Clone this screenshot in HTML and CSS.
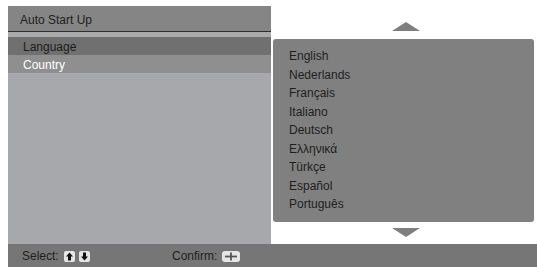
FILE: index.html
```html
<!DOCTYPE html>
<html>
<head>
<meta charset="utf-8">
<link rel="stylesheet" href="styles.css">
</head>
<body>
<div class="screen">
  <div class="main">
    <div class="left">
      <div class="header">Auto Start Up</div>
      <div class="strip"></div>
      <div class="item selected">Language</div>
      <div class="item active">Country</div>
      <div class="fill"></div>
    </div>
    <div class="right">
      <div class="arrow up">
        <svg width="28" height="9" viewBox="0 0 28 9"><polygon points="14,0 28,9 0,9" fill="#7e7e7e"/></svg>
      </div>
      <div class="list">
        <div class="lang">English</div>
        <div class="lang">Nederlands</div>
        <div class="lang">Français</div>
        <div class="lang">Italiano</div>
        <div class="lang">Deutsch</div>
        <div class="lang">Ελληνικά</div>
        <div class="lang">Türkçe</div>
        <div class="lang">Español</div>
        <div class="lang">Português</div>
      </div>
      <div class="arrow down">
        <svg width="28" height="9" viewBox="0 0 28 9"><polygon points="0,0 28,0 14,9" fill="#7e7e7e"/></svg>
      </div>
    </div>
  </div>
  <div class="footer">
    <div class="hint select">
      <span>Select:</span>
      <svg class="key" width="11" height="11" viewBox="0 0 11 11"><rect x="0" y="0" width="11" height="11" rx="2" fill="#e6e6e6"/><polygon points="5.5,1.5 9,5.5 7,5.5 7,9.5 4,9.5 4,5.5 2,5.5" fill="#111"/></svg>
      <svg class="key" width="11" height="11" viewBox="0 0 11 11"><rect x="0" y="0" width="11" height="11" rx="2" fill="#e6e6e6"/><polygon points="5.5,9.5 9,5.5 7,5.5 7,1.5 4,1.5 4,5.5 2,5.5" fill="#111"/></svg>
    </div>
    <div class="hint confirm">
      <span>Confirm:</span>
      <svg class="key" width="18" height="11" viewBox="0 0 18 11"><rect x="0" y="0" width="18" height="11" rx="3" fill="#e6e6e6"/><rect x="3" y="4.6" width="12" height="1.8" fill="#555"/><rect x="8.1" y="1.5" width="1.8" height="8" fill="#555"/></svg>
    </div>
  </div>
</div>
</body>
</html>
```
FILE: styles.css
```css
html, body {
  margin: 0;
  padding: 0;
  background: #ffffff;
}
body {
  width: 537px;
  height: 267px;
  overflow: hidden;
  font-family: "Liberation Sans", Arial, sans-serif;
  font-size: 12px;
  color: #222;
}
.screen {
  display: flex;
  flex-direction: column;
  height: 267px;
  padding-left: 8px;
  box-sizing: border-box;
}
.main {
  display: grid;
  grid-template-columns: 263px 1fr;
  height: 244px;
}
.left {
  display: flex;
  flex-direction: column;
  padding-top: 6px;
}
.header {
  height: 26px;
  background: #858585;
  border-bottom: 1px solid #2e2e2e;
  box-sizing: border-box;
  padding-left: 12px;
  padding-top: 1px;
  line-height: 26px;
  color: #1e1e1e;
}
.strip {
  height: 5px;
  background: #a9aaac;
}
.item {
  height: 18px;
  line-height: 18px;
  padding-left: 15px;
  padding-top: 1px;
  box-sizing: border-box;
}
.item.selected {
  background: #707070;
  color: #1c1c1c;
}
.item.active {
  background: #8f8f90;
  color: #ffffff;
}
.fill {
  flex: 1;
  background: #a7a8ab;
}
.right {
  display: flex;
  flex-direction: column;
  padding-left: 2px;
  padding-right: 3px;
}
.arrow {
  display: flex;
  justify-content: center;
  padding-left: 5px;
}
.arrow svg {
  display: block;
}
.arrow.up {
  padding-top: 22px;
  height: 9px;
  margin-bottom: 8px;
}
.arrow.down {
  margin-top: 6px;
}
.list {
  height: 183px;
  background: #808080;
  border-radius: 3px;
  box-sizing: border-box;
  padding: 8px 0 0 16px;
}
.lang {
  height: 18.5px;
  line-height: 18.5px;
  color: #1e1e1e;
}
.footer {
  height: 23px;
  background: #767676;
  display: flex;
  align-items: center;
  padding-top: 1px;
  box-sizing: border-box;
  color: #1e1e1e;
}
.hint {
  display: flex;
  align-items: center;
  gap: 4px;
}
.hint span {
  margin-right: 1px;
}
.select {
  padding-left: 14px;
  width: 150px;
}
.key {
  display: block;
}
```
